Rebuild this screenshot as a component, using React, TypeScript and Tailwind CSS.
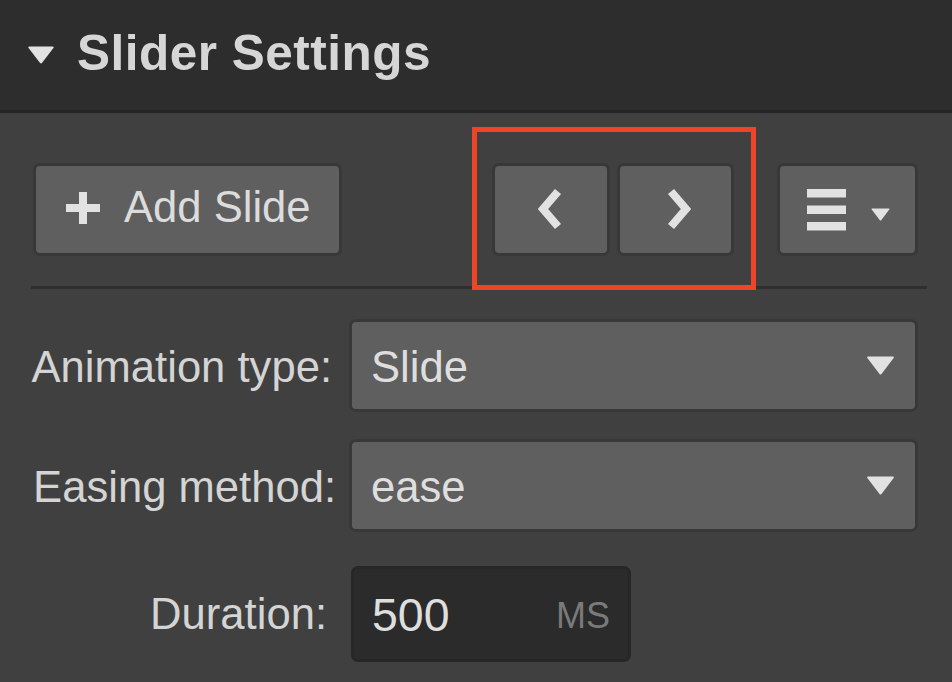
const font = "font-['Liberation_Sans',Arial,sans-serif]";

function Caret({ className }: { className: string }) {
  return (
    <svg viewBox="0 0 28 19" className={className} aria-hidden="true">
      <path d="M0.5 1.5 Q0.5 0.5 2 0.5 H26 Q27.5 0.5 27.5 1.5 L15 18 Q14 19 13 18 Z" fill="#e2e2e2" />
    </svg>
  );
}

function Btn({ className, children }: { className: string; children: React.ReactNode }) {
  return (
    <button
      className={`flex h-[93px] shrink-0 items-center rounded-[7px] border-[3px] border-[#383838] bg-[#5f5f5f] ${className}`}
    >
      {children}
    </button>
  );
}

function Select({ label, labelPad, value }: { label: string; labelPad: string; value: string }) {
  return (
    <div className="flex items-center">
      <span className={`w-[318px] shrink-0 whitespace-nowrap pt-[4px] text-right text-[#d4d4d4] ${labelPad}`}>{label}</span>
      <div className="flex h-[93px] w-[569px] items-center justify-between rounded-[7px] border-[3px] border-[#383838] bg-[#5f5f5f] pl-[19px] pr-[20px] text-[#dedede]">
        <span className="pt-[4px]">{value}</span>
        <Caret className="h-[19px] w-[29px]" />
      </div>
    </div>
  );
}

export default function App() {
  return (
    <div className={`relative h-[682px] w-[952px] overflow-hidden bg-[#404040] text-[43.6px] leading-none ${font}`}>
      <header className="flex h-[113px] items-center border-b-[3px] border-[#252525] bg-[#2d2d2d] pb-[1px] pl-[27px]">
        <Caret className="h-[18px] w-[28px]" />
        <h1 className="ml-[22px] pb-[3px] text-[49.5px] font-bold tracking-[0.5px] text-[#d6d6d6]">Slider Settings</h1>
      </header>

      <main className="pl-[31px] pr-[25px]">
        <div className="mt-[50px] flex pl-[2px] pr-[9px]">
          <Btn className="w-[309px] pb-[4px] pl-[30px] text-[#dcdcdc]">
            <svg viewBox="0 0 34 32" className="h-[32px] w-[34px]" aria-hidden="true">
              <path d="M13 0h8v12H34v8H21V32h-8V20H0v-8h13z" fill="#e2e2e2" />
            </svg>
            <span className="ml-[24px]">Add Slide</span>
          </Btn>
          <Btn className="ml-[150px] w-[118px] justify-center pb-[2px] pr-[3px]">
            <svg viewBox="0 0 24 42" className="h-[42px] w-[24px]" aria-hidden="true">
              <path d="M20 3.5 L5 21 L20 38.5" fill="none" stroke="#e2e2e2" strokeWidth="8" strokeLinejoin="miter" />
            </svg>
          </Btn>
          <Btn className="ml-[7px] w-[117px] justify-center pb-[2px] pl-[7px]">
            <svg viewBox="0 0 24 42" className="h-[42px] w-[24px]" aria-hidden="true">
              <path d="M4 3.5 L19 21 L4 38.5" fill="none" stroke="#e2e2e2" strokeWidth="8" strokeLinejoin="miter" />
            </svg>
          </Btn>
          <Btn className="ml-[43px] w-[141px] pl-[27px]">
            <svg viewBox="0 0 39 42" className="h-[42px] w-[39px]" aria-hidden="true">
              <path d="M0 0h39v8.5H0zM0 16.5h39v8.5H0zM0 33h39v8.5H0z" fill="#e2e2e2" />
            </svg>
            <Caret className="ml-[25px] mt-[9px] h-[13px] w-[19px]" />
          </Btn>
        </div>

        <hr className="mt-[30px] h-[3px] border-0 bg-[#2f2f2f]" />

        <div className="mt-[30px]">
          <Select label="Animation type:" labelPad="pr-[17px]" value="Slide" />
        </div>
        <div className="mt-[27px]">
          <Select label="Easing method:" labelPad="pr-[13px]" value="ease" />
        </div>
        <div className="mt-[34px] flex items-center">
          <span className="w-[320px] shrink-0 whitespace-nowrap pr-[24px] pt-[2px] text-right text-[#d4d4d4]">Duration:</span>
          <div className="flex h-[96px] w-[280px] items-center justify-between rounded-[7px] border-[3px] border-[#272727] bg-[#2b2b2b] pl-[18px] pr-[18px]">
            <span className="pt-[2px] text-[46.5px] text-[#dedede]">500</span>
            <span className="pt-[4px] text-[36px] text-[#7a7a7a]">MS</span>
          </div>
        </div>
      </main>

      <div className="pointer-events-none absolute left-[472px] top-[127px] h-[163px] w-[284px] border-[5px] border-[#ee4528]" />
    </div>
  );
}
